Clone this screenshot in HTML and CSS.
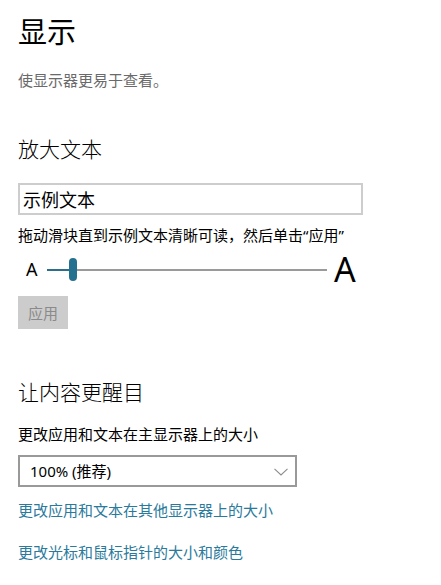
FILE: index.html
```html
<!DOCTYPE html>
<html lang="zh-CN">
<head>
<meta charset="utf-8">
<title>显示</title>
<link rel="stylesheet" href="styles.css">
</head>
<body>
<main class="page">
  <h1 class="title">显示</h1>
  <p class="subtitle">使显示器更易于查看。</p>

  <h2 class="section">放大文本</h2>
  <div class="sample">示例文本</div>
  <p class="hint">拖动滑块直到示例文本清晰可读，然后单击<span class="quote">“</span>应用<span class="quote">”</span></p>
  <div class="slider-row">
    <span class="a-small">A</span>
    <div class="track">
      <div class="fill"></div>
      <div class="thumb"></div>
    </div>
    <span class="a-big">A</span>
  </div>
  <button class="apply" disabled>应用</button>

  <h2 class="section section-2">让内容更醒目</h2>
  <p class="label">更改应用和文本在主显示器上的大小</p>
  <div class="select">
    <span class="select-text">100% (推荐)</span>
    <svg class="chevron" width="14" height="8" viewBox="0 0 14 8"><path d="M0.5 0.8 L7 7 L13.5 0.8" fill="none" stroke="#8c8c8c" stroke-width="1.1"/></svg>
  </div>
  <a class="link link-1" href="#">更改应用和文本在其他显示器上的大小</a>
  <a class="link link-2" href="#">更改光标和鼠标指针的大小和颜色</a>
</main>
</body>
</html>
```
FILE: styles.css
```css
html, body {
  margin: 0;
  padding: 0;
  background: #ffffff;
}
body {
  font-family: "Noto Sans CJK SC", "Noto Sans", sans-serif;
  font-weight: 400;
  color: #000;
}
.page {
  padding-left: 18px;
  display: flex;
  flex-direction: column;
  align-items: flex-start;
}
.title {
  margin: 10px 0 0;
  font-size: 29px;
  line-height: 40px;
  font-weight: 400;
}
.subtitle {
  margin: 20px 0 0;
  font-size: 15px;
  line-height: 20px;
  color: #6a6a6a;
}
.section {
  margin: 44px 0 0;
  font-size: 21px;
  line-height: 28px;
  font-weight: 300;
}
.section-2 {
  margin-top: 48px;
}
.sample {
  margin-top: 21px;
  box-sizing: border-box;
  width: 345px;
  height: 32px;
  border: 2px solid #cdcdcd;
  padding-left: 3px;
  font-size: 18px;
  line-height: 28px;
}
.hint {
  margin: 10px 0 0;
  font-size: 15px;
  line-height: 20px;
}
.quote {
  font-family: "Noto Sans", sans-serif;
}
.slider-row {
  margin-top: 13px;
  height: 24px;
  display: flex;
  align-items: center;
}
.a-small {
  font-family: "Noto Sans", sans-serif;
  font-size: 18px;
  line-height: 1;
  margin-left: 8px;
  margin-bottom: 2px;
  width: 12px;
}
.track {
  position: relative;
  margin-left: 9px;
  width: 280px;
  height: 2px;
  background: #9a9a9a;
}
.fill {
  width: 24px;
  height: 2px;
  background: #2b6f8c;
}
.thumb {
  position: absolute;
  left: 22px;
  top: -11px;
  width: 8px;
  height: 23px;
  border-radius: 4px;
  background: #24708f;
}
.a-big {
  font-family: "Noto Sans", sans-serif;
  font-size: 34px;
  line-height: 1;
  margin-left: 7px;
  margin-bottom: 3px;
}
.apply {
  margin-top: 14px;
  width: 50px;
  height: 33px;
  border: 0;
  padding: 0;
  background: #cccccc;
  color: #8a8a8a;
  font-family: "Noto Sans CJK SC", sans-serif;
  font-size: 15px;
  line-height: 33px;
}
.label {
  margin: 19px 0 0;
  font-size: 15px;
  line-height: 20px;
}
.select {
  margin-top: 11px;
  box-sizing: border-box;
  width: 279px;
  height: 32px;
  border: 2px solid #999999;
  padding: 0 7px 0 10px;
  display: flex;
  align-items: center;
  justify-content: space-between;
}
.select-text {
  font-family: "Noto Sans", "Noto Sans CJK SC", sans-serif;
  font-size: 15px;
  line-height: 20px;
}
.chevron {
  display: block;
  margin-top: 1px;
}
.link {
  font-size: 15px;
  line-height: 20px;
  color: #2a7a9c;
  text-decoration: none;
}
.link-1 {
  margin-top: 13px;
}
.link-2 {
  margin-top: 22px;
}
```
